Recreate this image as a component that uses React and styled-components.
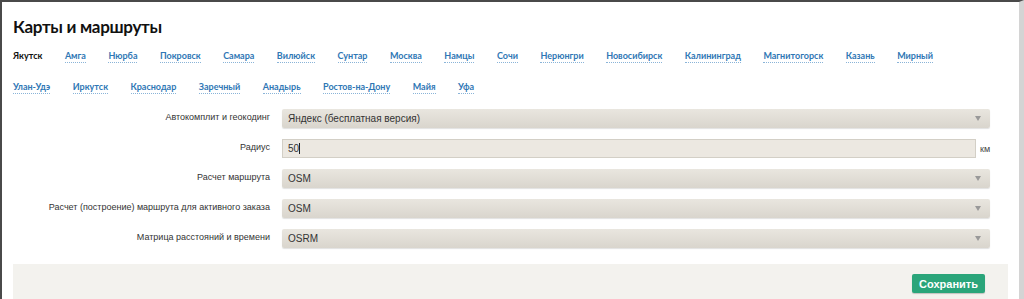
import React from "react";
import styled, { createGlobalStyle } from "styled-components";

const GlobalStyle = createGlobalStyle`
  html, body {
    margin: 0;
    padding: 0;
    background: #fff;
  }
  body {
    font-family: "Liberation Sans", Arial, sans-serif;
  }
`;

const Panel = styled.div`
  box-sizing: border-box;
  width: 1024px;
  height: 299px;
  overflow: hidden;
  background: #fff;
  border-top: 2px solid #4a4a4a;
  border-left: 2px solid #4a4a4a;
  border-right: 5px solid #d4d4d4;
  padding: 0 11px 0 11px;
`;

const Title = styled.h1`
  margin: 14px 0 0;
  font-family: Lato, "Liberation Sans", Arial, sans-serif;
  font-size: 17px;
  letter-spacing: -0.3px;
  font-weight: bold;
  color: #111;
  line-height: 22px;
`;

const Tabs = styled.div`
  display: flex;
  flex-wrap: wrap;
  column-gap: 22.5px;
  max-width: 960px;
  margin-top: 2px;
`;

const Tab = styled.span`
  height: 31px;
  line-height: 31px;
  font-family: Lato, "Liberation Sans", Arial, sans-serif;
  font-size: 9px;
  font-weight: bold;
  color: ${(p) => (p.active ? "#111" : "#2f77b5")};
  span {
    border-bottom: ${(p) => (p.active ? "none" : "1px dotted #8ab4d8")};
    padding-bottom: 1px;
  }
`;

const Form = styled.div`
  display: grid;
  grid-template-columns: 257px 1fr;
  column-gap: 12px;
  row-gap: 11px;
  margin-top: 7px;
  padding-right: 18px;
`;

const Label = styled.div`
  text-align: right;
  font-size: 9px;
  color: #333;
  line-height: 12px;
  padding-top: 2px;
`;

const Select = styled.div`
  position: relative;
  height: 19px;
  box-sizing: border-box;
  border-radius: 2px;
  background: linear-gradient(#e9e6df, #d9d5cd);
  box-shadow: 0 1px 1px rgba(0, 0, 0, 0.12);
  font-size: 10px;
  color: #333;
  line-height: 19px;
  padding-left: 6px;
  &::after {
    content: "";
    position: absolute;
    right: 9px;
    top: 7px;
    border-left: 3px solid transparent;
    border-right: 3px solid transparent;
    border-top: 5px solid #999;
  }
`;

const InputRow = styled.div`
  display: flex;
  align-items: center;
  gap: 4px;
`;

const Input = styled.div`
  flex: 1;
  height: 19px;
  box-sizing: border-box;
  border: 1px solid #d3cfc6;
  background: #ece8e1;
  font-size: 10px;
  color: #333;
  line-height: 17px;
  padding-left: 5px;
  &::after {
    content: "";
    display: inline-block;
    width: 1px;
    height: 11px;
    background: #222;
    vertical-align: -2px;
  }
`;

const Unit = styled.span`
  font-size: 9px;
  color: #444;
  width: 10px;
`;

const Footer = styled.div`
  display: flex;
  justify-content: flex-end;
  background: #f3f2ee;
  margin-top: 16px;
  height: 60px;
  padding: 10px 23px 0 0;
  box-sizing: border-box;
`;

const SaveButton = styled.button`
  height: 19px;
  padding: 0 7px;
  border: none;
  border-radius: 2px;
  background: #2aa57a;
  color: #fff;
  font-family: "Liberation Sans", Arial, sans-serif;
  font-size: 11px;
  font-weight: bold;
  box-shadow: 0 1px 1px rgba(0, 0, 0, 0.2);
`;

const cities = [
  "Якутск", "Амга", "Нюрба", "Покровск", "Самара", "Вилюйск", "Сунтар",
  "Москва", "Намцы", "Сочи", "Нерюнгри", "Новосибирск", "Калининград",
  "Магнитогорск", "Казань", "Мирный", "Улан-Удэ", "Иркутск", "Краснодар",
  "Заречный", "Анадырь", "Ростов-на-Дону", "Майя", "Уфа",
];

export default function App() {
  return (
    <>
      <GlobalStyle />
      <Panel>
        <Title>Карты и маршруты</Title>
        <Tabs>
          {cities.map((c, i) => (
            <Tab key={c} active={i === 0}>
              <span>{c}</span>
            </Tab>
          ))}
        </Tabs>
        <Form>
          <Label>Автокомплит и геокодинг</Label>
          <Select>Яндекс (бесплатная версия)</Select>
          <Label>Радиус</Label>
          <InputRow>
            <Input>50</Input>
            <Unit>км</Unit>
          </InputRow>
          <Label>Расчет маршрута</Label>
          <Select>OSM</Select>
          <Label>Расчет (построение) маршрута для активного заказа</Label>
          <Select>OSM</Select>
          <Label>Матрица расстояний и времени</Label>
          <Select>OSRM</Select>
        </Form>
        <Footer>
          <SaveButton>Сохранить</SaveButton>
        </Footer>
      </Panel>
    </>
  );
}
